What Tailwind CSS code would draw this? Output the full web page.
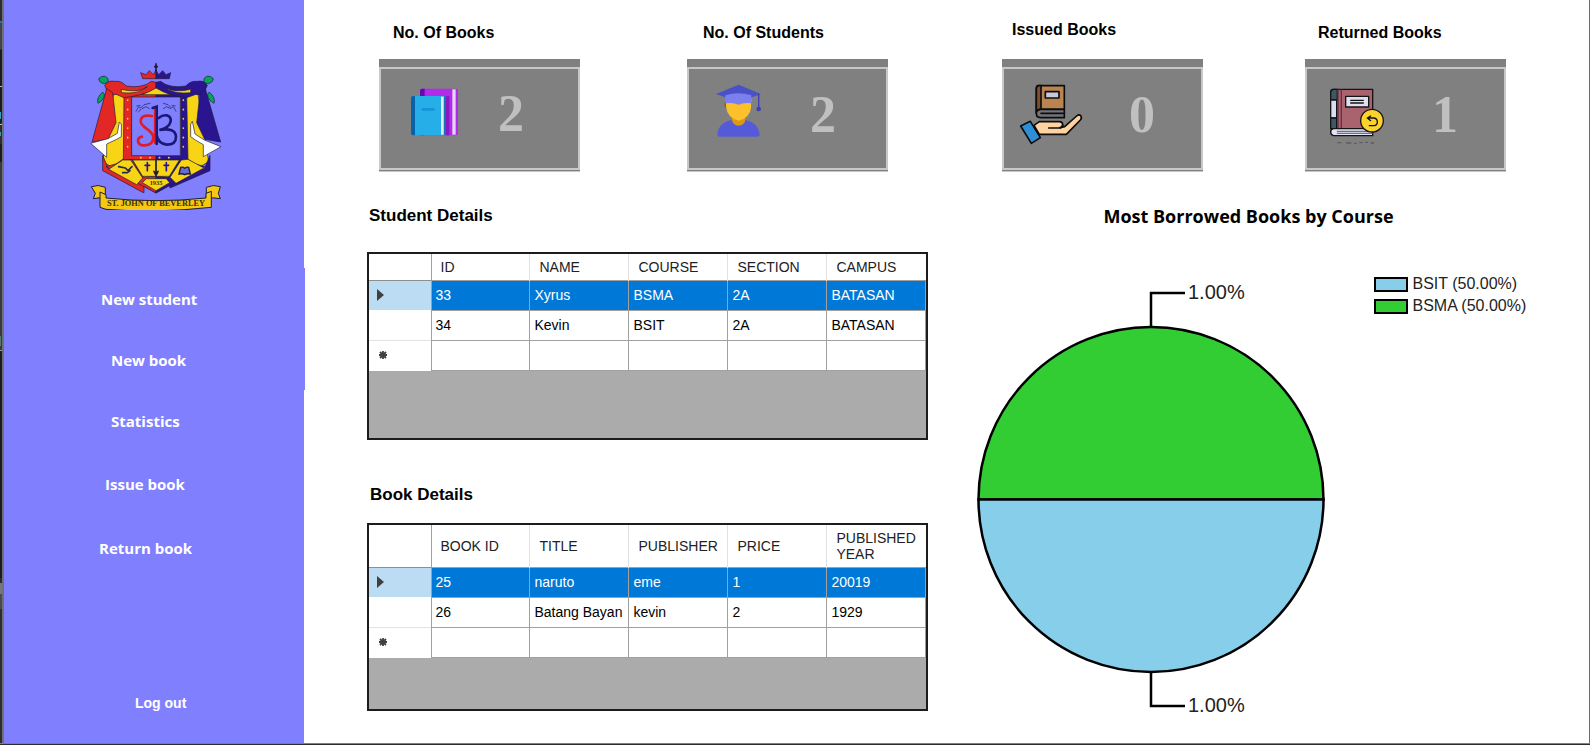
<!DOCTYPE html>
<html lang="en">
<head>
<meta charset="utf-8">
<meta name="viewport" content="width=device-width, initial-scale=1">
<title>Library Dashboard</title>
<script src="https://cdn.jsdelivr.net/npm/@tailwindcss/browser@4"></script>
</head>
<body class="bg-white text-black font-['Liberation_Sans',Arial,sans-serif]">
<div class="flex min-h-screen flex-col">
<div class="flex flex-1 border-r border-[#6b6b6b]">

  <svg class="w-[2px] shrink-0 self-stretch" viewBox="0 0 2 743" preserveAspectRatio="none" aria-hidden="true">
    <rect width="2" height="743" fill="#2d2d2d"/>
    <rect y="21" width="2" height="2" fill="#0e7ad0"/><rect y="23" width="2" height="26" fill="#444"/>
    <rect y="50" width="2" height="73" fill="#1c1c1c"/><rect y="86" width="2" height="1" fill="#bbb"/>
    <rect y="112" width="1" height="7" fill="#3a9bd0"/><rect y="124" width="2" height="1" fill="#bbb"/>
    <rect y="132" width="1" height="4" fill="#3a9bb0"/><rect y="144" width="2" height="18" fill="#1c1c1c"/>
    <rect y="162" width="2" height="188" fill="#3a3a3a"/><rect y="336" width="1" height="10" fill="#4f7f6a"/>
    <rect y="350" width="2" height="1" fill="#999"/><rect y="351" width="2" height="227" fill="#1c1c1c"/>
    <rect y="583" width="2" height="11" fill="#777"/><rect y="594" width="2" height="15" fill="#4a4a4a"/>
  </svg>

  <aside class="flex w-[302px] shrink-0 flex-col border-l-2 border-[#6f6f7c] bg-[#8080ff] pt-[62px] text-white">
    <!-- school crest -->
    <svg class="ml-[86px] h-[148px] w-[132px] shrink-0" viewBox="60 36 396 444" role="img" aria-label="St. John of Beverley crest">
      <g stroke="#1c1c3a" stroke-width="2" stroke-linejoin="round">
        <path d="M86 86q8-10 20-7 10 4 9 16-8 8-18 5-10-4-11-14zM98 126q8 6 4 16-6 12-18 18-6-16 14-34z" fill="#08a45c"/>
        <path d="M430 86q-8-10-20-7-10 4-9 16 8 8 18 5 10-4 11-14zM418 126q-8 6-4 16 6 12 18 18 6-16-14-34z" fill="#08a45c"/>
        <path d="M130 132L98 335l160 94 158-94-32-203z" fill="#f7d414"/>
        <path d="M98 316l18 42 42-30h28l36 56v44l-6-2L98 362z" fill="#e32724"/>
        <path d="M420 316l-18 42-48-30h-24l-36 56 6 30 120-52z" fill="#2a1490"/>
        <path d="M162 130h96v14h-72v172h72v14H160z" fill="#e32724"/>
        <path d="M350 130h-92v14h74v172h-74v14h96z" fill="#2a1490"/>
        <path d="M186 328l30 54 42-4v51L108 350z" fill="#e32724"/>
        <path d="M330 328l-32 54-40-4v51l146-79z" fill="#2a1490"/>
        <path d="M116 358l42-28 24 0 36 54-18 20z" fill="#f7d414"/>
        <path d="M402 354l-48-26-20 2-34 52 18 18z" fill="#f7d414"/>
        <path d="M188 330h140l-30 49h-80z" fill="#f7d414"/>
        <path d="M217 398l12-12h60l10 12-41 24z" fill="#f7d414"/>
        <path d="M104 106q10-16 30-12 22-2 34 14 50 8 76-14l14 3v20q-34 18-96 26l-24-10-20 4z" fill="#e32724"/>
        <path d="M412 106q-10-16-30-12-22-2-34 14-50 8-76-14l-14 3v20q34 18 92 26l28-10 20 4z" fill="#2a1490"/>
        <path d="M216 134q26-10 42-20 20 12 44 20z" fill="#f7d414"/>
        <path d="M154 118q50 12 78-8-28 24-78 18zM362 118q-50 12-78-8 28 24 78 18z" fill="#f7d414"/>
        <path d="M110 116L66 276l48-8 24-50-10-90z" fill="#e32724"/>
        <path d="M406 116l46 160-48-8-24-50 10-90z" fill="#2a1490"/>
        <path d="M62 280l52-14 28-16 6-34 6 6v38l-14 8-30 14v40z" fill="#fff"/>
        <path d="M453 290l-50-20-28-18-8-38-5 8v38l14 10 24 14v36z" fill="#fff"/>
        <path d="M185 141h146v176H185z" fill="#8080ff"/>
        <path d="M218 86l-6-18 16 6 10-12 12 12 8-14v26z" fill="#e32724"/>
        <path d="M258 86V60l8 14 12-12 10 12 14-6-4 18z" fill="#2a1490"/>
        <path d="M258 40v24M252 50h12" stroke-width="5" fill="none"/>
      </g>
      <g fill="none" stroke-linecap="round">
        <g stroke="#1c1c5a" stroke-width="2">
          <path d="M198 184l8-14 6 4 10-10 18-4M200 168l10-2M216 176l12-6 10 6M206 186l6-8M318 184l-8-14-6 4-10-10-14-4M316 168l-10-2M302 176l-12-6-10 6"/>
        </g>
        <path d="M254 176v104" stroke="#df1c28" stroke-width="5"/>
        <path d="M246 198q-34-6-34 16c0 20 38 26 38 48q0 24-26 24-20 0-20-14 0-10 12-12" stroke="#df1c28" stroke-width="8"/>
        <path d="M248 174l12-4v112M266 204q12-10 24-8 14 4 12 18-4 20-34 26 48-8 50 20 0 24-28 24-26-4-30-28" stroke="#1c1878" stroke-width="8"/>
        <path d="M173 150v160M340 150v160M212 323h110" stroke="#f4d321" stroke-width="5" stroke-dasharray="1 27"/>
        <path d="M232 338v24M225 346h14M289 338v24M282 346h14" stroke="#2a1490" stroke-width="5"/>
        <path d="M258 332v38M252 364l6 12 6-12" stroke="#1c1c3a" stroke-width="5"/>
        <path d="M146 350l20 4 8 8 12-12M158 368h14l8-6" stroke="#2a2a50" stroke-width="5"/>
        <path d="M327 372l5-20q8-2 12 3 6-5 12-3l5 20q-10-2-17 2-7-4-17-2z" fill="#6a6ad0" stroke="#1c1c3a" stroke-width="4"/>
      </g>
      <text x="258" y="405" text-anchor="middle" font-family="Liberation Serif, serif" font-weight="700" font-size="19" fill="#3a3000">1935</text>
      <g stroke="#1c1c3a" stroke-width="3" stroke-linejoin="round" fill="#f4c813">
        <path d="M64 410q20-8 42 2v36q-20-8-36-2l6-16zM451 410q-20-8-42 2v36q20-8 42-2l-6-16z"/>
        <path d="M90 426l18 8v10q150 16 300 0v-14l16-6v48q-166 18-316 6l-18-6z"/>
      </g>
      <text x="258" y="468" text-anchor="middle" font-family="Liberation Serif, serif" font-weight="700" font-size="25" fill="#3a3000">ST. JOHN OF BEVERLEY</text>
    </svg>

    <nav class="mt-[58px] flex flex-col items-stretch font-['Open_Sans',sans-serif] text-[15px] font-bold">
      <button type="button" class="-mr-px h-[62px] bg-[#8080ff] pl-[97px] text-left">New student</button>
      <button type="button" class="-mr-px h-[60px] bg-[#8080ff] pl-[107px] text-left">New book</button>
      <button type="button" class="h-[62px] pl-[107px] text-left">Statistics</button>
      <button type="button" class="h-[64px] pl-[101px] text-left">Issue book</button>
      <button type="button" class="h-[64px] pl-[95px] text-left">Return book</button>
    </nav>
    <button type="button" class="mt-auto mb-[26px] h-[28px] pl-[131px] text-left text-sm font-bold">Log out</button>
  </aside>

  <main class="flex min-w-0 flex-1 flex-col pl-[63px]">
    <section class="grid grid-cols-[308fr_315fr_303fr_201fr] pr-[83px] pl-3" aria-label="Totals">
      <article>
        <h2 class="h-[59px] pt-[21px] pl-[14px] text-base font-bold">No. Of Books</h2>
        <div class="w-[201px] border-b border-[#c8c8c8]">
          <div class="h-2 bg-[#808080]"></div>
          <div class="flex h-[103px] items-start border-2 border-[#c8c8c8] bg-[#808080] pt-[11px] pl-2">
            <svg class="h-[72px] w-[80px]" viewBox="57 210 240 216" aria-hidden="true">
              <rect x="150" y="236" width="114" height="140" rx="6" fill="#b32bea"/><path d="M156 236h8v140h-14V242q0-6 6-6z" fill="#6208ae"/>
              <rect x="247" y="238" width="10" height="136" fill="#e6d6f2"/>
              <path d="M226 258h12v118h-12z" fill="#8a18c4"/>
              <rect x="123" y="258" width="105" height="118" rx="6" fill="#26aee8"/><path d="M129 258h6v118h-6q-6 0-6-6V264q0-6 6-6z" fill="#0862a8"/>
              <path d="M222 258q6 0 6 6v106q0 6-6 6z" fill="#1272b4"/><rect x="213" y="260" width="8" height="114" fill="#dfe9f2"/>
              <rect x="155" y="294" width="39" height="8" rx="4" fill="#1593d6"/>
            </svg>
            <p class="w-[84px] text-center font-['Liberation_Serif',serif] text-[52px] leading-[68px] font-bold text-[#c0c0c0]">2</p>
          </div>
          <div class="h-px bg-[#808080]"></div>
        </div>
      </article>
      <article>
        <h2 class="h-[59px] pt-[21px] pl-[16px] text-base font-bold">No. Of Students</h2>
        <div class="w-[201px] border-b border-[#c8c8c8]">
          <div class="h-2 bg-[#808080]"></div>
          <div class="flex h-[103px] items-start border-2 border-[#c8c8c8] bg-[#808080] pt-[11px] pl-2">
            <svg class="h-[72px] w-[80px]" viewBox="51 210 240 216" aria-hidden="true">
              <path d="M112 372q4-34 44-42h40q38 8 43 42 0 8-6 8H118q-6 0-6-8z" fill="#545ad8"/>
              <path d="M156 310h40v20q-2 16-20 17-18-1-20-17z" fill="#d99a16"/>
              <rect x="134" y="274" width="82" height="20" rx="6" fill="#b84a18"/>
              <path d="M138 268h76v22q-4 34-38 42-34-8-38-42z" fill="#fbc02a"/>
              <path d="M108 252l68-28 67 28-67 24z" fill="#4a50c8"/>
              <path d="M136 256q40-12 78 0v24q-20-4-38 4-18-8-40-4z" fill="#7b80ee"/>
              <path d="M236 252v40" stroke="#3e3fb4" stroke-width="4"/><circle cx="236" cy="297" r="7" fill="#3e3fb4"/>
            </svg>
            <p class="w-[92px] text-center font-['Liberation_Serif',serif] text-[52px] leading-[70px] font-bold text-[#c0c0c0]">2</p>
          </div>
          <div class="h-px bg-[#808080]"></div>
        </div>
      </article>
      <article>
        <h2 class="h-[59px] pt-[18px] pl-[10px] text-base font-bold">Issued Books</h2>
        <div class="w-[201px] border-b border-[#c8c8c8]">
          <div class="h-2 bg-[#808080]"></div>
          <div class="flex h-[103px] items-start border-2 border-[#c8c8c8] bg-[#808080] pt-[11px] pl-2">
            <svg class="h-[72px] w-[80px]" viewBox="66 210 240 216" aria-hidden="true">
              <g stroke="#0c0c0c" stroke-width="5" stroke-linejoin="round" stroke-linecap="round">
                <path d="M146 227h77v71H150q-11 2-11 12v-73q0-10 7-10z" fill="#b98450"/>
                <path d="M146 227h7v70q-10 0-14 10v-70q0-10 7-10z" fill="#80502c"/>
                <path d="M223 298H151q-12 2-12 12 0 13 12 13h72z" fill="#73737c"/><path d="M153 310h68" fill="none"/>
                <rect x="166" y="245" width="41" height="19" fill="#c9c9d6"/>
                <path d="M132 346l16-11h62q8 2 8 9t-8 9l14-3 36-32q7-6 12-1 5 6-1 13l-42 43H148z" fill="#ffd3a0"/>
                <path d="M176 354h34q8-2 8-9" fill="none"/>
                <path d="M92 348l29-14 30 49-27 17z" fill="#2f8ed8"/>
              </g>
            </svg>
            <p class="w-[100px] text-center font-['Liberation_Serif',serif] text-[52px] leading-[70px] font-bold text-[#c0c0c0]">0</p>
          </div>
          <div class="h-px bg-[#808080]"></div>
        </div>
      </article>
      <article>
        <h2 class="h-[59px] pt-[21px] pl-[13px] text-base font-bold">Returned Books</h2>
        <div class="w-[201px] border-b border-[#c8c8c8]">
          <div class="h-2 bg-[#808080]"></div>
          <div class="flex h-[103px] items-start border-2 border-[#c8c8c8] bg-[#808080] pt-[11px] pl-2">
            <svg class="h-[72px] w-[80px]" viewBox="75 210 240 216" aria-hidden="true">
              <g stroke="#141414" stroke-width="4" stroke-linejoin="round" stroke-linecap="round">
                <path d="M130 238h118v118H122V248q0-10 8-10z" fill="#a9636f"/>
                <path d="M130 238h12v32h-20v-22q0-10 8-10z" fill="#3c5864"/><path d="M122 270h18v54h-18z" fill="#dcdcf0"/><path d="M122 324h18v32h-18z" fill="#3c5864"/>
                <path d="M144 240v114M154 240v114" fill="none" stroke="#6a3040"/>
                <path d="M248 356H130q-8 2-8 10t8 11h118z" fill="#e4e4f4"/><path d="M142 364h104M142 370h104" stroke="#6c7480" fill="none"/>
                <rect x="167" y="259" width="69" height="32" fill="#dedef0"/><path d="M182 271h38M182 279h38" fill="none"/>
                <circle cx="246" cy="332" r="34" fill="#fbd32c"/>
                <path d="M242 318l-10 6 10 8M232 324h20q10 2 10 12t-10 11h-14" fill="none"/>
              </g>
              <path d="M142 398h12M168 399h16M192 400h8M208 398h10M226 397h8M242 399h10" stroke="#5c5c5c" stroke-width="4" fill="none"/>
            </svg>
            <p class="w-[100px] text-center font-['Liberation_Serif',serif] text-[52px] leading-[70px] font-bold text-[#c0c0c0]">1</p>
          </div>
          <div class="h-px bg-[#808080]"></div>
        </div>
      </article>
    </section>

    <div class="grid flex-1 grid-cols-[561fr_660fr]">
      <div class="min-w-0">
        <h2 id="students" class="pt-[32px] pl-[2px] text-[17px] leading-6 font-bold">Student Details</h2>
        <div class="mt-[24px] h-[188px] border-2 border-[#1c1c1c] bg-[#ababab]">
          <table aria-labelledby="students" class="w-full table-fixed border-collapse bg-white text-left text-sm">
            <thead>
              <tr class="h-[26px] border-b border-[#8e8e8e] text-[#222]">
                <td class="w-[62px] border-r border-[#a0a0a0]"></td>
                <th class="border-r border-[#e2e2e2] pl-[9px] font-normal">ID</th><th class="border-r border-[#e2e2e2] pl-[9px] font-normal">NAME</th><th class="border-r border-[#e2e2e2] pl-[9px] font-normal">COURSE</th><th class="border-r border-[#e2e2e2] pl-[9px] font-normal">SECTION</th><th class="pl-[9px] font-normal">CAMPUS</th>
              </tr>
            </thead>
            <tbody>
              <tr class="h-[30px] bg-[#0078d7] text-white">
                <td class="border-r border-[#a0a0a0] bg-[#bcdcf4] pl-2"><svg class="h-3 w-2" viewBox="0 0 8 12" aria-label="Current row"><path d="M0 0l7 6-7 6z" fill="#404040"/></svg></td>
                <td class="border border-[#a0a0a0] pl-1">33</td><td class="border border-[#a0a0a0] pl-1">Xyrus</td><td class="border border-[#a0a0a0] pl-1">BSMA</td><td class="border border-[#a0a0a0] pl-1">2A</td><td class="border border-[#a0a0a0] pl-1">BATASAN</td>
              </tr>
              <tr class="h-[30px]">
                <td class="border-r border-[#a0a0a0]"></td>
                <td class="border border-[#a0a0a0] pl-1">34</td><td class="border border-[#a0a0a0] pl-1">Kevin</td><td class="border border-[#a0a0a0] pl-1">BSIT</td><td class="border border-[#a0a0a0] pl-1">2A</td><td class="border border-[#a0a0a0] pl-1">BATASAN</td>
              </tr>
              <tr class="h-[30px]">
                <td class="border-t border-r border-t-[#e2e2e2] border-r-[#a0a0a0] pl-[10px]"><svg class="h-2 w-2" viewBox="0 0 8 8" aria-label="New row"><path d="M4 0v8M0 4h8M1 1l6 6M7 1L1 7" stroke="#404040" stroke-width="1.8"/></svg></td>
                <td class="border border-[#a0a0a0]"></td><td class="border border-[#a0a0a0]"></td><td class="border border-[#a0a0a0]"></td><td class="border border-[#a0a0a0]"></td><td class="border border-[#a0a0a0]"></td>
              </tr>
            </tbody>
          </table>
        </div>

        <h2 id="books" class="pt-[43px] pl-[3px] text-[17px] leading-6 font-bold">Book Details</h2>
        <div class="mt-[16px] h-[188px] border-2 border-[#1c1c1c] bg-[#ababab]">
          <table aria-labelledby="books" class="w-full table-fixed border-collapse bg-white text-left text-sm">
            <thead>
              <tr class="h-[42px] border-b border-[#8e8e8e] leading-4 text-[#222]">
                <td class="w-[62px] border-r border-[#a0a0a0]"></td>
                <th class="border-r border-[#e2e2e2] pl-[9px] font-normal">BOOK ID</th><th class="border-r border-[#e2e2e2] pl-[9px] font-normal">TITLE</th><th class="border-r border-[#e2e2e2] pl-[9px] font-normal">PUBLISHER</th><th class="border-r border-[#e2e2e2] pl-[9px] font-normal">PRICE</th><th class="pl-[9px] font-normal">PUBLISHED YEAR</th>
              </tr>
            </thead>
            <tbody>
              <tr class="h-[30px] bg-[#0078d7] text-white">
                <td class="border-r border-[#a0a0a0] bg-[#bcdcf4] pl-2"><svg class="h-3 w-2" viewBox="0 0 8 12" aria-label="Current row"><path d="M0 0l7 6-7 6z" fill="#404040"/></svg></td>
                <td class="border border-[#a0a0a0] pl-1">25</td><td class="border border-[#a0a0a0] pl-1">naruto</td><td class="border border-[#a0a0a0] pl-1">eme</td><td class="border border-[#a0a0a0] pl-1">1</td><td class="border border-[#a0a0a0] pl-1">20019</td>
              </tr>
              <tr class="h-[30px]">
                <td class="border-r border-[#a0a0a0]"></td>
                <td class="border border-[#a0a0a0] pl-1">26</td><td class="border border-[#a0a0a0] pl-1 whitespace-nowrap">Batang Bayan</td><td class="border border-[#a0a0a0] pl-1">kevin</td><td class="border border-[#a0a0a0] pl-1">2</td><td class="border border-[#a0a0a0] pl-1">1929</td>
              </tr>
              <tr class="h-[30px]">
                <td class="border-t border-r border-t-[#e2e2e2] border-r-[#a0a0a0] pl-[10px]"><svg class="h-2 w-2" viewBox="0 0 8 8" aria-label="New row"><path d="M4 0v8M0 4h8M1 1l6 6M7 1L1 7" stroke="#404040" stroke-width="1.8"/></svg></td>
                <td class="border border-[#a0a0a0]"></td><td class="border border-[#a0a0a0]"></td><td class="border border-[#a0a0a0]"></td><td class="border border-[#a0a0a0]"></td><td class="border border-[#a0a0a0]"></td>
              </tr>
            </tbody>
          </table>
        </div>
      </div>

      <section class="min-w-0 pt-[32px] pl-[47px]">
        <h2 class="pl-[128px] font-['Open_Sans',sans-serif] text-lg leading-6 font-bold">Most Borrowed Books by Course</h2>
        <div class="mt-[42px] flex items-start">
          <svg class="h-[450px] w-[355px] shrink-0" viewBox="0 0 355 450" role="img" aria-label="Pie chart: BSMA 1.00%, BSIT 1.00%">
            <g stroke="#000" stroke-width="2.5">
              <path d="M3.500 229.500a172.500 172.500 0 0 1 345 0z" fill="#32cd32"/>
              <path d="M3.500 229.500a172.500 172.500 0 0 0 345 0z" fill="#87ceeb"/>
              <path d="M176 57V23h34M176 402v34h34" fill="none"/>
            </g>
            <g font-family="Liberation Sans, Arial, sans-serif" font-size="20" fill="#222"><text x="213" y="29">1.00%</text><text x="213" y="442">1.00%</text></g>
          </svg>
          <ul class="mt-[3px] ml-[44px] text-base leading-[22px] text-[#222]">
            <li class="flex items-center gap-1"><span class="h-[15px] w-[34px] border-2 border-black bg-[#87ceeb]"></span>BSIT (50.00%)</li>
            <li class="flex items-center gap-1"><span class="h-[15px] w-[34px] border-2 border-black bg-[#32cd32]"></span>BSMA (50.00%)</li>
          </ul>
        </div>
      </section>
    </div>
  </main>
</div>
<div class="h-[3px] border-t border-[#808080] bg-[#2d2d30]"></div>
</div>
</body>
</html>
